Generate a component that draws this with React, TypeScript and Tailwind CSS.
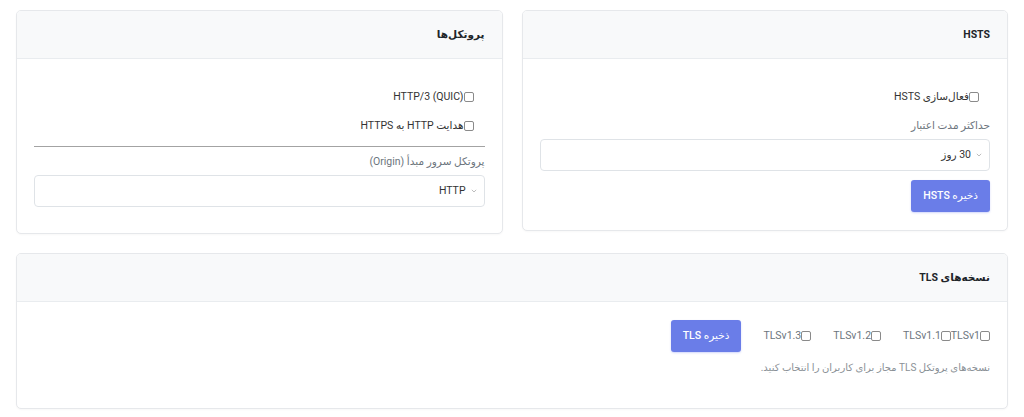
import React from "react";

// ─── small building blocks ─────────────────────────────────────────────────
function Card({ title, children }: { title: string; children: React.ReactNode }) {
  return (
    <div className="bg-white border border-[#e6e8eb] rounded-[5px] overflow-hidden shadow-[0_1px_2px_rgba(0,0,0,0.03)]">
      <div className="h-[48px] flex items-center px-[17px] bg-[#f8f9fa] border-b border-[#e9ecef]">
        <h3 className="text-[10.5px] font-bold text-[#212529]">{title}</h3>
      </div>
      {children}
    </div>
  );
}

function Check({ label, muted = false }: { label: string; muted?: boolean }) {
  return (
    <label className={`flex items-center h-[20px] text-[10.5px] ${muted ? "text-[#6c757d]" : "text-[#333]"}`}>
      <input
        type="checkbox"
        className="appearance-none w-[10px] h-[10px] border border-[#8a8a8a] rounded-[2px] bg-white shrink-0"
      />
      <span>{label}</span>
    </label>
  );
}

function Select({ value }: { value: string }) {
  return (
    <div className="h-[32px] flex items-center gap-[5px] pr-[7px] border border-[#dfe3e7] rounded-[4px] bg-white text-[10.5px] text-[#333]">
      <svg width="6" height="4" viewBox="0 0 6 4" className="shrink-0">
        <path d="M0.8 0.8 L3 3 L5.2 0.8" fill="none" stroke="#b5b5b5" strokeWidth="0.9" />
      </svg>
      <span>{value}</span>
    </div>
  );
}

function Button({ children }: { children: React.ReactNode }) {
  return (
    <button className="h-[32px] px-[12px] rounded-[3px] bg-[#6a7de8] text-white text-[10.5px] font-medium shadow-[0_1px_2px_rgba(103,119,239,0.3)]">
      {children}
    </button>
  );
}

// ─── page ───────────────────────────────────────────────────────────────────
export default function App() {
  return (
    <div
      dir="rtl"
      className="min-h-screen bg-white px-4 pt-[10px] pb-[10px]"
      style={{ fontFamily: 'Roboto, "DejaVu Sans", sans-serif' }}
    >
      <div className="grid grid-cols-2 gap-[19px] items-start">
        {/* HSTS */}
        <Card title="HSTS">
          <div className="px-[17px] pt-[28px] pb-[18px]">
            <div className="pr-[11px]">
              <Check label="فعال‌سازی HSTS" />
            </div>
            <div className="mt-[10px] h-[18px] flex items-center text-[10.5px] text-[#6c757d]">
              حداکثر مدت اعتبار
            </div>
            <div className="mt-[4px]">
              <Select value="30 روز" />
            </div>
            <div className="mt-[9px]">
              <Button>ذخیره HSTS</Button>
            </div>
          </div>
        </Card>

        {/* Protocols */}
        <Card title="پروتکل‌ها">
          <div className="px-[17px] pt-[28px] pb-[26px]">
            <div className="pr-[11px] flex flex-col gap-[9px]">
              <Check label="HTTP/3 (QUIC)" />
              <Check label="هدایت HTTP به HTTPS" />
            </div>
            <hr className="mt-[10px] border-0 border-t border-[#a3a3a3]" />
            <div className="mt-[6px] h-[18px] flex items-center text-[10.5px] text-[#6c757d]">
              پروتکل سرور مبدأ (Origin)
            </div>
            <div className="mt-[4px]">
              <Select value="HTTP" />
            </div>
          </div>
        </Card>
      </div>

      {/* TLS versions */}
      <div className="mt-[19px]">
        <Card title="نسخه‌های TLS">
          <div className="px-[17px] pt-[18px] pb-[32px]">
            <div className="flex items-center gap-[22px]">
              <div className="flex items-center">
                <Check label="TLSv1" muted />
                <Check label="TLSv1.1" muted />
              </div>
              <Check label="TLSv1.2" muted />
              <Check label="TLSv1.3" muted />
              <Button>ذخیره TLS</Button>
            </div>
            <p className="mt-[6px] h-[18px] flex items-center text-[10px] text-[#8a9096]">
              نسخه‌های پروتکل TLS مجاز برای کاربران را انتخاب کنید.
            </p>
          </div>
        </Card>
      </div>
    </div>
  );
}
